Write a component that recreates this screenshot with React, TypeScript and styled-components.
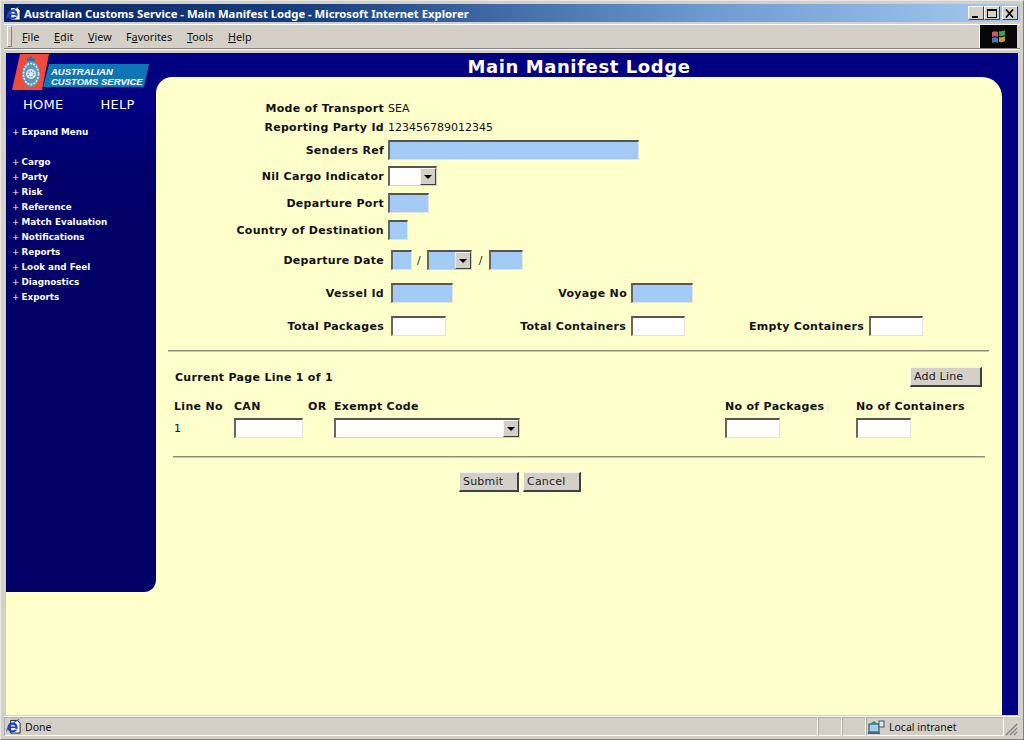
import React from "react";
import styled, { createGlobalStyle } from "styled-components";

const Global = createGlobalStyle`
  * { box-sizing: border-box; }
  html, body { margin: 0; padding: 0; width: 1024px; height: 740px; overflow: hidden; background: #d4d0c8; }
`;

const ui = `"Noto Sans", Tahoma, sans-serif`;
const verdana = `"DejaVu Sans", Verdana, sans-serif`;

const Win = styled.div`
  width: 1024px; height: 740px;
  display: flex; flex-direction: column;
  padding: 3px 4px 3px 4px;
  background: #d4d0c8;
  border: 1px solid #808080;
  border-top-color: #e8e6e0; border-left-color: #e8e6e0;
`;
const TitleBar = styled.div`
  height: 18px; flex: none;
  margin: 0 -1px 0 -1px;
  display: flex; align-items: center;
  padding: 0 2px 0 2px;
  gap: 3px;
  background: linear-gradient(90deg, #0a246a 0%, #16407f 30%, #6f9cd3 70%, #a6caf0 100%);
`;
const TitleText = styled.div`
  flex: 1;
  font: bold 11.3px ${ui};
  color: #fff;
  white-space: nowrap;
`;
const WinButtons = styled.div`display: flex;`;
const WinBtn = styled.div<{ $gap?: number }>`
  width: 16px; height: 14px;
  margin-left: ${p => p.$gap ?? 0}px;
  background: #d4d0c8;
  border: 1px solid; border-color: #fff #404040 #404040 #fff;
  display: flex; align-items: center; justify-content: center;
`;
const MenuBar = styled.div`
  height: 25px; flex: none;
  margin: 2px -1px 0 -1px;
  display: flex; align-items: center; justify-content: space-between;
  border-top: 1px solid #fff; border-bottom: 1px solid #808080;
  box-shadow: 0 1px 0 #fff;
  padding-left: 3px;
`;
const MenuList = styled.div`
  display: flex; align-items: center;
  height: 100%;
  &::before { content: ""; width: 3px; height: 19px; border: 1px solid; border-color: #fff #808080 #808080 #fff; margin-right: 10px; }
`;
const MenuItem = styled.span<{ $w: number }>`
  width: ${p => p.$w}px;
  font: 10.8px ${ui};
  color: #111;
  u { text-decoration: underline; }
`;
const Throbber = styled.div`
  width: 38px; height: 23px; background: #060606;
  border-left: 1px solid #fff;
  display: flex; align-items: center; justify-content: center;
  margin-right: 3px;
`;
const Viewport = styled.div`
  flex: 1; min-height: 0;
  margin: 4px 1px 1px 1px;
  display: grid;
  grid-template-columns: 150px 1fr;
  background: #ffffcc;
`;
const Sidebar = styled.aside`
  height: 539px;
  background: linear-gradient(180deg, #000080 0, #000080 60px, #000068 130px, #000066 100%);
  border-bottom-right-radius: 12px;
  display: flex; flex-direction: column;
`;
const Logo = styled.svg`
  display: block; flex: none;
  margin: 1px 0 0 6px;
`;
const TopLinks = styled.div`
  display: flex;
  margin-top: 4px;
  padding-left: 17px;
  height: 18px; align-items: center;
  gap: 37px;
  font: 13px ${verdana};
  letter-spacing: 0.25px;
  color: #fff;
`;
const NavText = styled.div<{ $top?: number }>`
  font: bold 8.8px/15px ${verdana};
  color: #fff;
  padding-left: 6px;
  margin-top: ${p => p.$top ?? 0}px;
  white-space: nowrap;
  span { display: inline-block; width: 9.5px; font-weight: normal; }
`;
const Main = styled.main`
  display: flex; flex-direction: column;
  background: #000080;
  padding-right: 16px;
`;
const PageTitle = styled.h1`
  margin: 0; height: 24px; flex: none;
  text-align: center;
  font: bold 18px/27px ${verdana};
  letter-spacing: 0.6px;
  color: #fff;
`;
const Panel = styled.div`
  flex: 1;
  background: #ffffcc;
  border-top-left-radius: 16px;
  border-top-right-radius: 20px;
  padding-top: 22px;
  color: #000;
`;
const Row = styled.div<{ $h: number }>`
  height: ${p => p.$h}px;
  display: flex; align-items: center;
`;
const Label = styled.label`
  font: bold 11px ${verdana};
  letter-spacing: 0.3px;
  color: #111;
  white-space: nowrap;
`;
const RowLabel = styled(Label)`
  width: 228px; text-align: right; flex: none; margin-right: 4px;
`;
const Value = styled.span`
  font: 11px ${verdana};
  color: #111;
`;
const TextBox = styled.input<{ $w: number; $blue?: boolean }>`
  width: ${p => p.$w}px; height: 20px; flex: none;
  padding: 0; margin: 0;
  border: solid; border-color: #555 #e6e4d8 #e6e4d8 #666;
  border-width: 2px 1px 1px 2px;
  background: ${p => (p.$blue ? "#a3cbf5" : "#fff")};
  outline: none;
  display: block;
`;
const Select = styled.div<{ $w: number; $blue?: boolean }>`
  width: ${p => p.$w}px; height: 20px; flex: none;
  border: solid; border-width: 2px 1px 1px 2px;
  border-color: #555 #d4d0c8 #d4d0c8 #666;
  background: ${p => (p.$blue ? "#a3cbf5" : "#fff")};
  display: flex; justify-content: flex-end; align-items: stretch;
`;
const SelectArrow = styled.div`
  width: 16px;
  background: #d4d0c8;
  border: 1px solid; border-color: #f4f4f0 #404040 #404040 #f4f4f0;
  display: flex; align-items: center; justify-content: center;
  &::after { content: ""; border: 4px solid transparent; border-top: 4px solid #000; border-bottom: 0; }
`;
const DateGroup = styled.div`
  display: flex; align-items: center; margin-left: 3px;
`;
const Slash = styled.span<{ $l: number; $r: number }>`
  font: 11px ${verdana};
  margin: 0 ${p => p.$r}px 0 ${p => p.$l}px;
  color: #222;
`;
const TotalsGrid = styled.div`
  display: grid;
  grid-template-columns: 235px 62px 178px 62px 176px 54px;
  grid-template-rows: 32px 34px;
  align-items: center;
`;
const GridLabel = styled(Label)<{ $pr: number }>`
  text-align: right; padding-right: ${p => p.$pr}px;
`;
const Rule = styled.hr<{ $l: number; $r: number; $top: number }>`
  border: 0; height: 2px; margin: ${p => p.$top}px ${p => p.$r}px 0 ${p => p.$l}px;
  background: #8d8c7c;
  border-bottom: 1px solid #c9c8a8;
`;
const PageLineRow = styled.div`
  display: flex; align-items: center; justify-content: space-between;
  height: 20px; margin-top: 15px;
  padding: 0 20px 0 19px;
`;
const Button = styled.button<{ $w: number }>`
  width: ${p => p.$w}px; height: 20px;
  margin: 0; padding: 0 0 0 3px;
  text-align: left;
  background: #d4d0c8;
  border: solid; border-width: 1px 2px 2px 1px;
  border-color: #f4f4ec #404040 #404040 #f4f4ec;
  font: 11px ${verdana};
  letter-spacing: 0.2px;
  color: #222;
`;
const LineGrid = styled.div`
  display: grid;
  grid-template-columns: 60px 74px 26px 391px 131px 1fr;
  grid-template-rows: 20px 24px;
  align-items: center;
  padding-left: 18px;
  margin-top: 9px;
`;
const ActionRow = styled.div`
  display: flex; gap: 4px;
  margin-top: 14px;
  padding-left: 303px;
`;
const StatusBar = styled.div`
  height: 20px; flex: none;
  margin: 0 -1px;
  border-top: 1px solid #fff;
  display: grid;
  grid-template-columns: 814px 24px 24px 1fr 16px;
  font: 10.5px ${ui};
  color: #111;
`;
const StatusCell = styled.div`
  border: 1px solid; border-color: #b0aca4 #fff #fff #b0aca4;
  display: flex; align-items: center; gap: 4px;
  padding-left: 1px;
  white-space: nowrap;
`;
const Grip = styled.svg`display: block; align-self: end;`;

const IEIcon = ({ s = 16 }: { s?: number }) => (
  <svg width={s} height={s} viewBox="0 0 16 16">
    <path d="M5 1.500h7l3 3v10.500h-10z" fill="#fff" stroke="#111" strokeWidth="1" />
    <circle cx="7" cy="9" r="4.200" fill="none" stroke="#1c3cc4" strokeWidth="2.400" />
    <path d="M3 8.800h8" stroke="#1c3cc4" strokeWidth="1.600" />
    <path d="M11 12l-2.500-1.500h3z" fill="#fff" />
    <path d="M1 13q-1-2 4-6.500t9-6" fill="none" stroke="#2a50d0" strokeWidth="1.100" />
  </svg>
);

const Crest = () => (
  <g>
    <polygon points="8,0 37,0 30,36 0,36" fill="#ee4b3a" />
    <ellipse cx="19" cy="20" rx="9" ry="13" fill="#5f98bf" />
    <ellipse cx="19" cy="20" rx="7.500" ry="10.500" fill="none" stroke="#e4eef2" strokeWidth="1.600" strokeDasharray="2 1.200" />
    <circle cx="19" cy="20" r="5" fill="#dfeaee" />
    <circle cx="19" cy="20" r="2.800" fill="none" stroke="#6c97b2" strokeWidth="1.400" strokeDasharray="1.500 1" />
    <path d="M15.500 7h7l1-3-2 1-2.500-3-2.500 3-2-1z" fill="#2f6f9f" />
  </g>
);

const menu: [string, string, number][] = [
  ["F", "ile", 32], ["E", "dit", 34], ["V", "iew", 38], ["", "", 61], ["T", "ools", 41], ["H", "elp", 30],
];
const nav = ["Cargo", "Party", "Risk", "Reference", "Match Evaluation", "Notifications", "Reports", "Look and Feel", "Diagnostics", "Exports"];

export default function App() {
  return (
    <>
      <Global />
      <Win>
        <TitleBar>
          <IEIcon s={15} />
          <TitleText>Australian Customs Service - Main Manifest Lodge - Microsoft Internet Explorer</TitleText>
          <WinButtons>
            <WinBtn>
              <svg width="10" height="9"><rect x="1" y="7" width="6" height="2" fill="#000" /></svg>
            </WinBtn>
            <WinBtn>
              <svg width="10" height="9"><rect x="0.5" y="0.5" width="9" height="8" fill="none" stroke="#000" /><rect x="0" y="0" width="10" height="2" fill="#000" /></svg>
            </WinBtn>
            <WinBtn $gap={2}>
              <svg width="10" height="9"><path d="M1 0.5l7 8M8 0.5l-7 8" stroke="#000" strokeWidth="1.700" /></svg>
            </WinBtn>
          </WinButtons>
        </TitleBar>
        <MenuBar>
          <MenuList>
            {menu.map(([k, r, w], i) =>
              i === 3 ? (
                <MenuItem key={i} $w={w}>F<u>a</u>vorites</MenuItem>
              ) : (
                <MenuItem key={i} $w={w}><u>{k}</u>{r}</MenuItem>
              )
            )}
          </MenuList>
          <Throbber>
            <svg width="16" height="15" viewBox="0 0 16 15">
              <path d="M1 3q3-1.500 6 0v5q-3-1.500-6 0z" fill="#c06060" />
              <path d="M8 2q3 1 6-1v5q-3 2-6 1z" fill="#4a9a50" />
              <path d="M1 9q3-1.500 6 0v5q-3-1.500-6 0z" fill="#4a78b0" />
              <path d="M8 8q3 1 6-1v5q-3 2-6 1z" fill="#c0a030" />
            </svg>
          </Throbber>
        </MenuBar>
        <Viewport>
          <Sidebar>
            <Logo width="140" height="37" viewBox="0 0 140 37">
              <polygon points="37,10 137,10 132,33 31,33" fill="#0e76b4" />
              <Crest />
              <text x="39" y="20.500" fontFamily="Liberation Sans" fontStyle="italic" fontWeight="bold" fontSize="9.500" fill="#fff">AUSTRALIAN</text>
              <text x="39" y="30.500" fontFamily="Liberation Sans" fontStyle="italic" fontWeight="bold" fontSize="9.500" fill="#fff">CUSTOMS SERVICE</text>
            </Logo>
            <TopLinks>
              <span>HOME</span>
              <span>HELP</span>
            </TopLinks>
            <NavText $top={12}><span>+</span>Expand Menu</NavText>
            <NavText $top={15}><span>+</span>{nav[0]}</NavText>
            {nav.slice(1).map(n => (
              <NavText key={n}><span>+</span>{n}</NavText>
            ))}
          </Sidebar>
          <Main>
            <PageTitle>Main Manifest Lodge</PageTitle>
            <Panel>
              <Row $h={18}><RowLabel>Mode of Transport</RowLabel><Value>SEA</Value></Row>
              <Row $h={20}><RowLabel>Reporting Party Id</RowLabel><Value>123456789012345</Value></Row>
              <Row $h={26}><RowLabel>Senders Ref</RowLabel><TextBox $w={251} $blue /></Row>
              <Row $h={26}><RowLabel>Nil Cargo Indicator</RowLabel><Select $w={49}><SelectArrow /></Select></Row>
              <Row $h={28}><RowLabel>Departure Port</RowLabel><TextBox $w={41} $blue /></Row>
              <Row $h={26}><RowLabel>Country of Destination</RowLabel><TextBox $w={20} $blue /></Row>
              <Row $h={34}>
                <RowLabel>Departure Date</RowLabel>
                <DateGroup>
                  <TextBox $w={21} $blue />
                  <Slash $l={5} $r={6}>/</Slash>
                  <Select $w={45} $blue><SelectArrow /></Select>
                  <Slash $l={7} $r={7}>/</Slash>
                  <TextBox $w={34} $blue />
                </DateGroup>
              </Row>
              <TotalsGrid>
                <GridLabel $pr={7}>Vessel Id</GridLabel>
                <TextBox $w={62} $blue />
                <GridLabel $pr={4}>Voyage No</GridLabel>
                <TextBox $w={62} $blue />
                <span />
                <span />
                <GridLabel $pr={7}>Total Packages</GridLabel>
                <TextBox $w={55} />
                <GridLabel $pr={5}>Total Containers</GridLabel>
                <TextBox $w={54} />
                <GridLabel $pr={5}>Empty Containers</GridLabel>
                <TextBox $w={54} />
              </TotalsGrid>
              <Rule $l={12} $r={13} $top={7} />
              <PageLineRow>
                <Label>Current Page Line 1 of 1</Label>
                <Button $w={72}>Add Line</Button>
              </PageLineRow>
              <LineGrid>
                <Label>Line No</Label>
                <Label>CAN</Label>
                <Label>OR</Label>
                <Label>Exempt Code</Label>
                <Label>No of Packages</Label>
                <Label>No of Containers</Label>
                <Value>1</Value>
                <TextBox $w={69} />
                <span />
                <Select $w={186}><SelectArrow /></Select>
                <TextBox $w={55} />
                <TextBox $w={55} />
              </LineGrid>
              <Rule $l={17} $r={17} $top={16} />
              <ActionRow>
                <Button $w={60}>Submit</Button>
                <Button $w={58}>Cancel</Button>
              </ActionRow>
            </Panel>
          </Main>
        </Viewport>
        <StatusBar>
          <StatusCell><IEIcon s={15} />Done</StatusCell>
          <StatusCell />
          <StatusCell />
          <StatusCell>
            <svg width="17" height="16" viewBox="0 0 17 16">
              <rect x="1" y="5" width="10" height="8" fill="#9fd0e8" stroke="#1a4a70" />
              <rect x="11" y="2" width="5" height="6" fill="#d8e8f0" stroke="#405868" />
              <path d="M2 5l4-3 4 3z" fill="#3a9a3a" />
              <rect x="0" y="13" width="12" height="2" fill="#406890" />
            </svg>
            Local intranet
          </StatusCell>
          <Grip width="14" height="14" viewBox="0 0 14 14">
            <path d="M13 2L2 13M13 6L6 13M13 10L10 13" stroke="#808080" strokeWidth="1.300" />
          </Grip>
        </StatusBar>
      </Win>
    </>
  );
}
